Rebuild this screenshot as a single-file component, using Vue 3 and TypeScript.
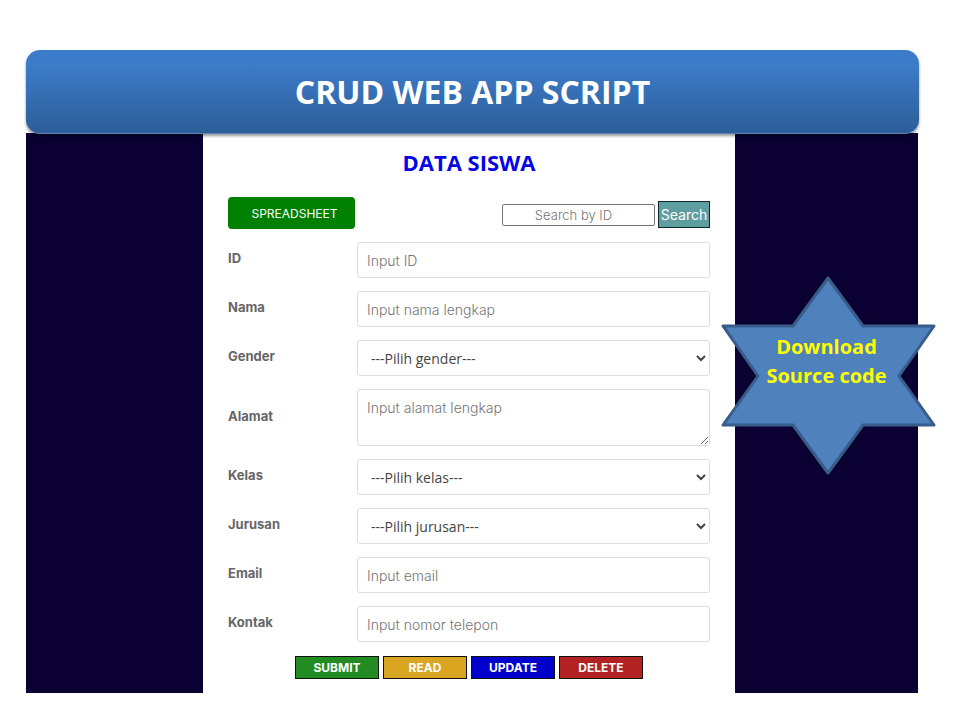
<script setup lang="ts">
import { reactive, ref } from 'vue'

interface Field {
  id: string
  label: string
  kind: 'text' | 'email' | 'tel' | 'select' | 'area'
  hint: string
}

const fields: Field[] = [
  { id: 'id', label: 'ID', kind: 'text', hint: 'Input ID' },
  { id: 'nama', label: 'Nama', kind: 'text', hint: 'Input nama lengkap' },
  { id: 'gender', label: 'Gender', kind: 'select', hint: '---Pilih gender---' },
  { id: 'alamat', label: 'Alamat', kind: 'area', hint: 'Input alamat lengkap' },
  { id: 'kelas', label: 'Kelas', kind: 'select', hint: '---Pilih kelas---' },
  { id: 'jurusan', label: 'Jurusan', kind: 'select', hint: '---Pilih jurusan---' },
  { id: 'email', label: 'Email', kind: 'email', hint: 'Input email' },
  { id: 'kontak', label: 'Kontak', kind: 'tel', hint: 'Input nomor telepon' },
]

const actions = ['SUBMIT', 'READ', 'UPDATE', 'DELETE']

const values = reactive<Record<string, string>>(
  Object.fromEntries(fields.map((f) => [f.id, ''])),
)
const query = ref('')
</script>

<template>
  <div class="page">
    <header class="banner">
      <h1>CRUD WEB APP SCRIPT</h1>
    </header>
    <div class="stage">
      <main class="card">
        <h2>DATA SISWA</h2>
        <div class="tools">
          <button type="button" class="sheet">SPREADSHEET</button>
          <form class="search" @submit.prevent>
            <input v-model="query" type="text" placeholder="Search by ID" aria-label="Search by ID" />
            <button type="submit">Search</button>
          </form>
        </div>
        <form @submit.prevent>
          <div class="fields">
            <div v-for="f in fields" :key="f.id" class="row">
              <label :for="f.id">{{ f.label }}</label>
              <select v-if="f.kind === 'select'" :id="f.id" v-model="values[f.id]" class="control">
                <option value="">{{ f.hint }}</option>
              </select>
              <textarea
                v-else-if="f.kind === 'area'"
                :id="f.id"
                v-model="values[f.id]"
                class="control area"
                :placeholder="f.hint"
              ></textarea>
              <input
                v-else
                :id="f.id"
                v-model="values[f.id]"
                class="control"
                :type="f.kind"
                :placeholder="f.hint"
              />
            </div>
          </div>
          <div class="actions">
            <button v-for="a in actions" :key="a" type="button" :class="a.toLowerCase()">{{ a }}</button>
          </div>
        </form>
      </main>
      <a class="star" href="#">
        <svg viewBox="0 0 217 202" aria-hidden="true">
          <path
            d="M108 3 L143 51 H214 L179 101 L214 150 H143 L108 198 L73 150 H3 L38 101 L3 51 H73 Z"
            fill="#4f81bd"
            stroke="#385d8a"
            stroke-width="3"
            stroke-linejoin="round"
          />
        </svg>
        <span>Download<br />Source code</span>
      </a>
    </div>
  </div>
</template>

<style>
body {
  background: #fff;
}
</style>

<style scoped>
* {
  box-sizing: border-box;
}
.page {
  padding: 50px 42px 27px 26px;
  font-family: Inter, 'Liberation Sans', sans-serif;
}
.banner {
  position: relative;
  z-index: 1;
  display: flex;
  align-items: center;
  justify-content: center;
  height: 84px;
  margin: 0 -1px -1px 0;
  border-radius: 14px;
  border-bottom: 1px solid #6283b4;
  background: linear-gradient(#3a7ccb, #3c7bc7 20%, #2c5d98);
  box-shadow: 0 2px 3px rgba(0, 0, 0, 0.4);
}
h1 {
  margin: 0;
  color: #fff;
  font: 700 32px/40px 'Open Sans', sans-serif;
}
.stage {
  position: relative;
  display: flex;
  justify-content: center;
  background: #0a0032;
  padding: 0 183px 0 177px;
}
.card {
  flex: 1;
  background: #fff;
  padding: 15px 25px 14px;
}
h2 {
  margin: 0 0 21px;
  color: #0505e6;
  text-align: center;
  font: 700 22px/28px 'Open Sans', sans-serif;
}
.tools {
  display: flex;
  justify-content: space-between;
  align-items: flex-start;
  margin-bottom: 13px;
}
button {
  padding: 0;
  font-family: inherit;
  color: #fff;
}
.sheet {
  width: 127px;
  height: 32px;
  padding-left: 6px;
  border: 0;
  border-radius: 4px;
  background: #008000;
  font-size: 12px;
}
.search {
  display: flex;
  align-items: center;
  gap: 3px;
  padding-top: 4px;
}
.search input {
  width: 153px;
  height: 22px;
  padding: 0 10px 0 0;
  border: 1px solid #767676;
  border-radius: 2px;
  text-align: center;
  font: 300 13px/18px Inter, sans-serif;
}
.search button {
  width: 52px;
  height: 27px;
  border: 1px solid #10282a;
  background: #5f9ea0;
  font-size: 14px;
}
.fields {
  display: grid;
  gap: 13px;
}
.row {
  display: grid;
  grid-template-columns: 129px minmax(0, 1fr);
  align-items: center;
}
label {
  padding-bottom: 4px;
  color: #666;
  font-size: 13px;
  font-weight: 700;
  line-height: 18px;
}
.control {
  width: 100%;
  height: 36px;
  padding: 0 9px;
  border: 1px solid #dedede;
  border-radius: 3px;
  background: #fff;
  color: #444;
  font: 300 14px/18px Inter, sans-serif;
}
select.control {
  font-family: 'Open Sans', sans-serif;
  font-weight: 400;
}
.area {
  display: block;
  height: 57px;
  padding: 9px;
  resize: both;
}
::placeholder {
  color: #757575;
}
.actions {
  display: flex;
  justify-content: center;
  gap: 4px;
  margin-top: 14px;
}
.actions button {
  width: 84px;
  height: 23px;
  border: 1px solid #111;
  font-size: 12px;
  font-weight: 700;
}
.submit {
  background: #228b22;
}
.read {
  background: #daa520;
}
.update {
  background: #0000cd;
}
.delete {
  background: #b22222;
}
.star {
  position: absolute;
  top: 142px;
  right: -19px;
  width: 217px;
  color: #ff0;
  text-align: center;
  text-decoration: none;
  font: 700 20px/29px 'Open Sans', sans-serif;
}
.star svg {
  display: block;
  width: 100%;
}
.star span {
  position: absolute;
  inset: 57px 4px auto 0;
}
</style>
